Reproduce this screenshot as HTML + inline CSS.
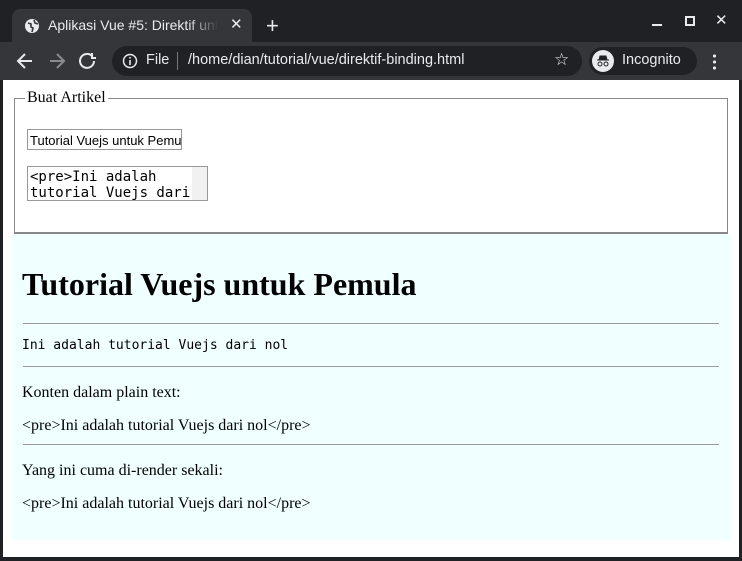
<!DOCTYPE html>
<html><head><meta charset="utf-8"><style>
*{margin:0;padding:0;box-sizing:border-box}
body{width:742px;height:561px;background:#202124;position:relative;overflow:hidden;font-family:"Liberation Serif",serif}
.tab{position:absolute;left:12px;top:9px;width:240px;height:34px;background:#35363a;border-radius:8px 8px 0 0;color:#e8eaed;font:14px "Liberation Sans",sans-serif}
.tab .t{position:absolute;left:36px;top:8px;white-space:nowrap;width:170px;overflow:hidden}
.tab .f{position:absolute;left:176px;top:6px;width:30px;height:20px;background:linear-gradient(90deg,rgba(53,54,58,0),#35363a)}
.bar{position:absolute;left:0;top:42px;width:742px;height:38px;background:#35363a}
.url{position:absolute;left:112px;top:4px;width:470px;height:30px;border-radius:15px;background:#202124;color:#e8eaed;font:14.5px "Liberation Sans",sans-serif}
.inc{position:absolute;left:589px;top:5px;width:108px;height:28px;border-radius:14px;background:#202124;color:#e8eaed;font:14.5px "Liberation Sans",sans-serif}
.page{position:absolute;left:3px;top:80px;width:736px;height:477px;background:#fff}
fieldset{position:absolute;left:11px;top:11px;width:714px;height:143px;border-style:solid;border-color:#888;border-width:1px 1px 2px 1px}
legend{font-size:16px;margin-left:10px;padding:0 2px;line-height:14px}
.in{position:absolute;left:24px;top:49px;width:155px;height:21px;border:1px solid #999;font:13px "Liberation Sans",sans-serif;padding:3px 2px;white-space:nowrap;overflow:hidden}
.ta{position:absolute;left:24px;top:86px;width:181px;height:35px;border:1px solid #999;font:14px "DejaVu Sans Mono",monospace;line-height:16px;padding:2px;overflow:hidden}
.ta .sb{position:absolute;right:0;top:0;width:15px;height:33px;background:#f1f1f1}
.cy{position:absolute;left:9px;top:154px;width:719px;height:306px;background:#f0ffff}
h1{position:absolute;left:19px;top:186px;font-size:32px;font-weight:bold}
hr{position:absolute;left:20px;width:696px;border:0;border-top:1px solid #999;height:0}
p{position:absolute;left:19px;font-size:16px}
.mono{font:13px "DejaVu Sans Mono",monospace}
</style></head><body>
<div class="tab"><svg style="position:absolute;left:12px;top:9px" width="16" height="16"><circle cx="8" cy="8" r="7" fill="#e8eaed"/><path d="M4 5l3 1 0 3 2 1-1 4M10 2l1 3 3 1" stroke="#35363a" stroke-width="1.6" fill="none"/></svg><span class="t">Aplikasi Vue #5: Direktif untuk</span><span class="f"></span><span style="position:absolute;left:218px;top:6px;font-size:15px">✕</span></div>
<div style="position:absolute;left:266px;top:13px;color:#e8eaed;font:22px 'Liberation Sans'">+</div>
<div style="position:absolute;left:652px;top:24px;width:10px;height:2px;background:#e8eaed"></div>
<div style="position:absolute;left:685px;top:16px;width:10px;height:10px;border:2px solid #e8eaed"></div>
<div style="position:absolute;left:715px;top:11px;color:#e8eaed;font:15px 'Liberation Sans'">✕</div>
<div class="bar">
<svg style="position:absolute;left:16px;top:10px" width="80" height="18" fill="none" stroke-width="2"><path d="M2 9h14M9 2L2 9l7 7" stroke="#e8eaed"/><path d="M34 9h14M41 2l7 7-7 7" stroke="#8a8b8d"/><path d="M80 9a7 7 0 1 1-2-5" stroke="#e8eaed" transform="translate(-2 0)"/><path d="M72 1v5h5" stroke="#e8eaed" transform="translate(4 0)"/></svg>
<div class="url"><svg style="position:absolute;left:10px;top:7px" width="16" height="16"><circle cx="8" cy="8" r="6.5" stroke="#e8eaed" stroke-width="1.5" fill="none"/><path d="M8 7v5M8 4v1.5" stroke="#e8eaed" stroke-width="1.6"/></svg><span style="position:absolute;left:34px;top:6px">File</span><span style="position:absolute;left:65px;top:6px;width:1px;height:18px;background:#777"></span><span style="position:absolute;left:76px;top:6px">/home/dian/tutorial/vue/direktif-binding.html</span><span style="position:absolute;left:442px;top:4px;font-size:17px">☆</span></div>
<div class="inc"><svg style="position:absolute;left:3px;top:3px" width="22" height="22"><circle cx="11" cy="11" r="11" fill="#e8eaed"/><path d="M5 10h12M8 6h6l1 4H7z" fill="#202124" stroke="#202124"/><circle cx="8" cy="14" r="2" stroke="#202124" fill="none"/><circle cx="14" cy="14" r="2" stroke="#202124" fill="none"/></svg><span style="position:absolute;left:33px;top:5px">Incognito</span></div>
<div style="position:absolute;left:713px;top:11px;width:3px;height:17px;background:radial-gradient(circle,#e8eaed 1.5px,transparent 1.6px) 0 0/3px 6px"></div>
</div>
<div class="page">
<fieldset><legend>Buat Artikel</legend></fieldset>
<div class="in">Tutorial Vuejs untuk Pemula</div>
<div class="ta">&lt;pre&gt;Ini adalah<br>tutorial Vuejs dari<br>nol<div class="sb"></div></div>
<div class="cy"></div>
<h1>Tutorial Vuejs untuk Pemula</h1>
<hr style="top:243px">
<p class="mono" style="top:258px">Ini adalah tutorial Vuejs dari nol</p>
<hr style="top:286px">
<p style="top:304px">Konten dalam plain text:</p>
<p style="top:337px">&lt;pre&gt;Ini adalah tutorial Vuejs dari nol&lt;/pre&gt;</p>
<hr style="top:364px">
<p style="top:382px">Yang ini cuma di-render sekali:</p>
<p style="top:415px">&lt;pre&gt;Ini adalah tutorial Vuejs dari nol&lt;/pre&gt;</p>
</div>
</body></html>
